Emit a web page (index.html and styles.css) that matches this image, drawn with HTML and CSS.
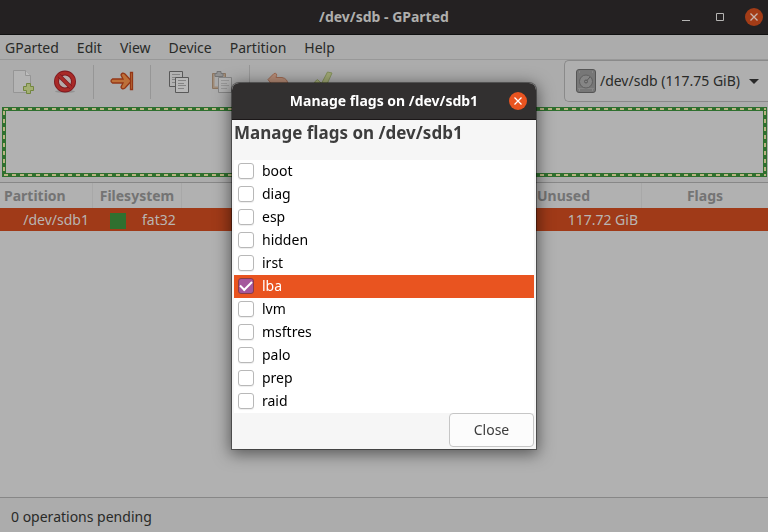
FILE: index.html
```html
<!DOCTYPE html>
<html lang="en">
<head>
<meta charset="utf-8">
<meta name="viewport" content="width=device-width, initial-scale=1">
<title>/dev/sdb - GParted</title>
<link rel="stylesheet" href="styles.css">
</head>
<body>
<div class="window">
  <header class="titlebar">
    <h1 class="title">/dev/sdb - GParted</h1>
    <div class="controls">
      <button class="control" aria-label="Minimize"><svg width="10" height="10" viewBox="0 0 10 10"><path d="M1 8.5h8" stroke="#b5b4b3" fill="none"/></svg></button>
      <button class="control" aria-label="Maximize"><svg width="10" height="10" viewBox="0 0 10 10"><path d="M1.5 1.5h7v7h-7z" stroke="#b5b4b3" fill="none"/></svg></button>
      <button class="control close-dim" aria-label="Close window"><svg width="10" height="10" viewBox="0 0 10 10"><path d="M1.500 1.500l7 7M8.500 1.500l-7 7" stroke="#c9b5ae" stroke-width="1.300" fill="none"/></svg></button>
    </div>
  </header>
  <nav class="menubar">
    <button class="menu">GParted</button>
    <button class="menu">Edit</button>
    <button class="menu">View</button>
    <button class="menu">Device</button>
    <button class="menu">Partition</button>
    <button class="menu">Help</button>
  </nav>
  <div class="toolbar">
    <div class="tools">
      <button class="tool" aria-label="New">
        <svg width="24" height="24" viewBox="0 0 24 24"><path d="M2.500 .5h12l5 5v17h-17z" fill="#b4b4b4" stroke="#959595"/><path d="M14.500 .5v5h5" fill="#bdbdbd" stroke="#959595"/><path d="M15.500 13.500h4v3h3v4h-3v3h-4v-3h-3v-4h3z" fill="#a3af72" stroke="#72863f"/></svg>
      </button>
      <button class="tool" aria-label="Delete">
        <svg width="24" height="24" viewBox="0 0 24 24"><ellipse cx="12" cy="21.500" rx="10" ry="1.500" fill="#777" opacity=".5"/><circle cx="12" cy="11.500" r="8.500" fill="#b5aaa9" stroke="#7e1a20" stroke-width="5"/><circle cx="12" cy="11.500" r="8.500" fill="none" stroke="#a92a27" stroke-width="3.200"/><path d="M6 5.500l12 12" stroke="#7e1a20" stroke-width="4"/><path d="M6 5.500l12 12" stroke="#a92a27" stroke-width="2.600"/></svg>
      </button>
      <span class="divider"></span>
      <button class="tool" aria-label="Resize or move">
        <svg width="24" height="24" viewBox="0 0 24 24"><path d="M20.500 2.500h2v17h-2z" fill="#bd7039" stroke="#943616" stroke-width="1.300"/><path d="M2.500 9h10.500L11 5q1-3 4-1l5.500 6v2l-5.500 6q-3 2-4-1l2-4h-10.500q-3-2 0-4z" fill="#bd7039" stroke="#943616" stroke-width="1.300"/></svg>
      </button>
      <span class="divider"></span>
      <button class="tool" aria-label="Copy">
        <svg width="24" height="24" viewBox="0 0 24 24"><path d="M2.500 1.500h13v15h-13z" fill="#b2b2b2" stroke="#595959"/><path d="M5 4.500h8M5 7.500h8M5 9.500h5M5 12.500h4" stroke="#858585"/><path d="M8.500 7.500h13v15h-13z" fill="#b8b8b8" stroke="#595959"/><path d="M11 10.500h8M11 13.500h6M11 15.500h8M11 18.500h6" stroke="#858585"/></svg>
      </button>
      <button class="tool" aria-label="Paste" disabled>
        <svg width="24" height="24" viewBox="0 0 24 24"><path d="M3.500 3.500h13v15h-13z" fill="#a08c79" stroke="#8b7560"/><path d="M5.500 5.500h9v11h-9z" fill="#aaa"/><path d="M8 1.500h4v2h2v3H6v-3h2z" fill="#929292" stroke="#747474"/><path d="M9.500 7.500h13v15h-13z" fill="#b2b2b2" stroke="#858585"/><path d="M12 10.500h8M12 13.500h6M12 15.500h8M12 18.500h6" stroke="#989898"/></svg>
      </button>
      <span class="divider"></span>
      <button class="tool" aria-label="Undo" disabled>
        <svg width="24" height="24" viewBox="0 0 24 24"><path d="M2 9.500l6-6q4-1 2 4h6q6 1 6 8v5h-4q1-8-8-7 1 7-3 3z" fill="#b58b76" stroke="#9d6952"/></svg>
      </button>
      <button class="tool" aria-label="Apply" disabled>
        <svg width="26" height="24" viewBox="0 0 26 24"><path d="M6.500 12l3-2.500 4 4 6-11.500 4.500 1-8 18h-3z" fill="#a0a874" stroke="#83905b"/></svg>
      </button>
    </div>
    <button class="device" aria-haspopup="listbox">
      <svg width="20" height="24" viewBox="0 0 20 24"><rect x=".5" y=".5" width="19" height="23" rx="2.500" fill="#777" stroke="#555"/><path d="M2 19.500h16" stroke="#858585"/><circle cx="10" cy="12.500" r="6.500" fill="#858585" stroke="#606060"/><circle cx="10" cy="12.500" r="1.500" fill="none" stroke="#585858"/><path d="M11 11.500l3-3.500" stroke="#585858"/><path d="M3 3h1M16 3h1M3 21h1M16 21h1" stroke="#9a9a9a"/></svg>
      <span>/dev/sdb (117.75 GiB)</span>
      <svg class="arrow" width="10" height="5" viewBox="0 0 10 5"><path d="M0 0h10L5 5z" fill="#292929"/></svg>
    </button>
  </div>
  <div class="graph" role="img" aria-label="/dev/sdb1"></div>
  <main class="list">
    <table class="partitions">
      <colgroup><col class="c-part"><col class="c-fs"><col><col class="c-unused"><col class="c-flags"></colgroup>
      <thead><tr><th>Partition</th><th class="center">Filesystem</th><th></th><th>Unused</th><th class="center">Flags</th></tr></thead>
      <tbody><tr><td class="name">/dev/sdb1</td><td class="fs"><span class="swatch"></span>fat32</td><td></td><td class="number">117.72 GiB</td><td></td></tr></tbody>
    </table>
  </main>
  <footer class="status">0 operations pending</footer>
</div>
<div class="overlay">
  <section class="dialog" role="dialog" aria-modal="true" aria-labelledby="dialog-title">
    <header class="dialog-bar">
      <h2 class="dialog-title" id="dialog-title">Manage flags on /dev/sdb1</h2>
      <button class="control dialog-x" aria-label="Close dialog"><svg width="10" height="10" viewBox="0 0 10 10"><path d="M1.500 1.500l7 7M8.500 1.500l-7 7" stroke="#fff" stroke-width="1.300" fill="none"/></svg></button>
    </header>
    <div class="dialog-body">
      <h3 class="heading">Manage flags on /dev/sdb1</h3>
      <div class="flags">
        <label class="flag"><input type="checkbox">boot</label>
        <label class="flag"><input type="checkbox">diag</label>
        <label class="flag"><input type="checkbox">esp</label>
        <label class="flag"><input type="checkbox">hidden</label>
        <label class="flag"><input type="checkbox">irst</label>
        <label class="flag selected"><input type="checkbox" checked>lba</label>
        <label class="flag"><input type="checkbox">lvm</label>
        <label class="flag"><input type="checkbox">msftres</label>
        <label class="flag"><input type="checkbox">palo</label>
        <label class="flag"><input type="checkbox">prep</label>
        <label class="flag"><input type="checkbox">raid</label>
      </div>
      <div class="actions"><button class="close">Close</button></div>
    </div>
  </section>
</div>
</body>
</html>
```
FILE: styles.css
```css
* { box-sizing: border-box; }
body {
  margin: 0;
  font: 14px/20px "Noto Sans", "Open Sans", sans-serif;
  color: #292a28;
  background: #acacac;
}
button { font: inherit; color: inherit; border: 0; padding: 0; background: none; }
h1, h2, h3 { margin: 0; font-size: 14px; font-weight: 700; }

.window { display: flex; flex-direction: column; min-height: 100vh; overflow: hidden; }
.titlebar {
  display: grid;
  grid-template-columns: 1fr auto 1fr;
  align-items: center;
  height: 35px;
  padding: 0 5px;
  background: #242122;
  border-bottom: 1px solid #111;
}
.title { grid-column: 2; color: #afafad; }
.controls { display: flex; justify-content: flex-end; gap: 16px; align-items: center; }
.control { display: grid; place-items: center; width: 18px; height: 18px; border-radius: 50%; }
.close-dim { background: #a33c17; }

.menubar { display: flex; gap: 18px; height: 25px; padding: 2px 5px 0; border-bottom: 1px solid #989898; align-items: center; }

.toolbar { display: flex; justify-content: space-between; height: 47px; }
.tools { display: flex; align-items: center; padding: 0 0 4px 11px; }
.tool { display: grid; width: 42px; height: 34px; place-items: center start; }
.divider { width: 1px; height: 34px; margin: 0 16px 0 -2px; background: #969696; }
.device {
  display: flex;
  align-items: center;
  gap: 4px;
  height: 42px;
  padding: 0 9px 0 11px;
  border: 1px solid #8a8a8a;
  border-right: 0;
  border-radius: 5px 0 0 5px;
  background: #afafaf;
}
.arrow { margin-left: 5px; }

.graph {
  height: 70px;
  margin: 0 1px 5px 2px;
  border: 1px solid #2f702f;
  padding: 3px;
  background:
    repeating-linear-gradient(90deg, #2f702f 0 1px, #bab483 1px 5px, #2f702f 5px 8px) 0 0 / 100% 2px no-repeat,
    repeating-linear-gradient(90deg, #2f702f 0 1px, #bab483 1px 5px, #2f702f 5px 8px) 0 100% / 100% 2px no-repeat,
    repeating-linear-gradient(#2f702f 0 3px, #bab483 3px 7px, #2f702f 7px 8px) 0 0 / 2px 100% no-repeat,
    repeating-linear-gradient(#2f702f 0 3px, #bab483 3px 7px, #2f702f 7px 8px) 100% 0 / 2px 100% no-repeat,
    linear-gradient(#b1b1b1 0 0) content-box,
    #2f702f;
}

.list { flex: 1; border-top: 1px solid #878787; background: #b1b1b1; }
.partitions { width: 100%; table-layout: fixed; border-collapse: separate; border-spacing: 0; }
.c-part { width: 93px; }
.c-fs { width: 89px; }
.c-unused { width: 109px; }
.c-flags { width: 126px; }
th { height: 25px; padding: 0 4px; text-align: left; color: #747474; border-right: 1px solid #a8a8a8; }
th:last-child { border-right: 0; }
.center { text-align: center; }
td { height: 23px; padding: 0 4px; background: #a03a18; color: #b9b5b2; white-space: nowrap; }
.name { text-align: right; }
.fs { padding-left: 17px; }
.swatch { display: inline-block; width: 16px; height: 16px; margin-right: 16px; background: #2f702f; vertical-align: middle; }
.number { text-align: right; }

.status { height: 35px; padding: 9px 11px; line-height: 20px; border-top: 1px solid #878787; }

.overlay { position: fixed; inset: 0; display: grid; place-items: center; }
.dialog {
  width: 304px;
  border-radius: 7px 7px 0 0;
  background: #f6f6f6;
  box-shadow: 0 0 0 1px rgba(0, 0, 0, .4), 0 3px 16px 2px rgba(0, 0, 0, .5);
}
.dialog-bar {
  display: grid;
  grid-template-columns: 1fr auto 1fr;
  align-items: center;
  height: 37px;
  padding: 0 9px;
  border-radius: 7px 7px 0 0;
  border-bottom: 1px solid #1b1718;
  background: #323030;
  color: #fff;
}
.dialog-title { grid-column: 2; }
.dialog-x { justify-self: end; background: #e95420; }
.dialog-body { padding: 2px; }
.heading { height: 38px; font-size: 17px; line-height: 22px; color: #3d3d3d; }
.flags { background: #fff; color: #000; }
.flag { display: flex; align-items: center; gap: 8px; height: 23px; padding: 0 4px 1px; }
.selected { background: #e95420; color: #fff; }
.flag input {
  appearance: none;
  width: 16px;
  height: 16px;
  margin: 0;
  border: 1px solid #b8b8b8;
  border-radius: 3px;
  background: #fff;
  box-shadow: 0 1px 1px #eee;
}
.flag input:checked {
  display: grid;
  place-items: center;
  border-color: #8a3c45;
  background: #a4579c;
  box-shadow: none;
}
.flag input:checked::after {
  content: "";
  width: 10px;
  height: 5px;
  margin-bottom: 3px;
  border: solid #fff;
  border-width: 0 0 2px 2px;
  transform: rotate(-45deg);
}
.actions { display: flex; justify-content: flex-end; }
.close { width: 85px; height: 34px; border: 1px solid #c6c6c6; border-radius: 4px; background: #fcfcfc; color: #3d3d3d; }
```
